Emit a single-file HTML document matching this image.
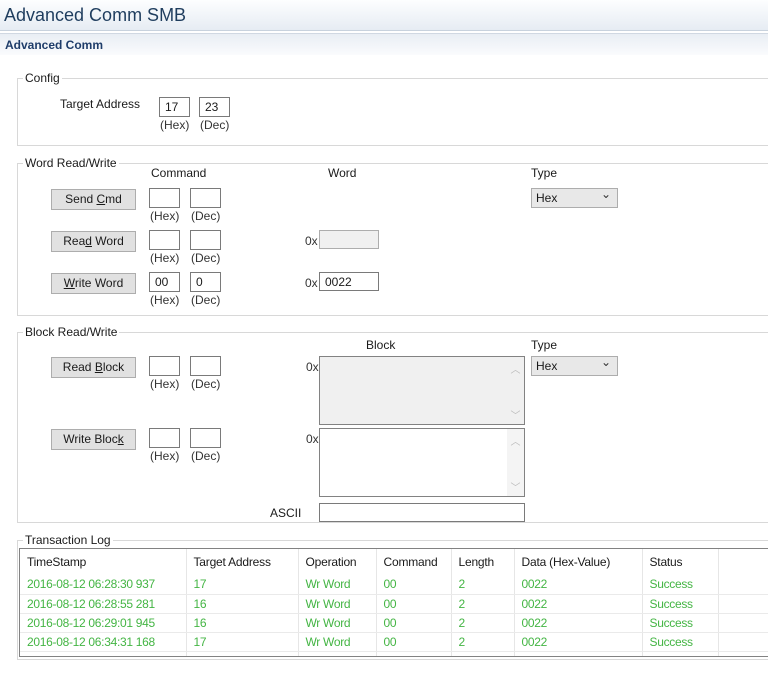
<!DOCTYPE html>
<html><head><style>
*{margin:0;padding:0;box-sizing:border-box}
body{width:768px;height:676px;background:#fff;font-family:"Liberation Sans",sans-serif;font-size:12px;color:#1a1a1a;position:relative;overflow:hidden}
.a{position:absolute;white-space:nowrap}
.title{left:0;top:0;width:768px;height:31px;background:linear-gradient(#fdfeff,#e6ecf3);border-bottom:1px solid #c8d2dd}
.band{left:0;top:33px;width:768px;height:22px;background:linear-gradient(#e9eef4,#fafbfd);border-top:1px solid #d0d8e2}
.grp{position:absolute;border:1px solid #d8d8d8;border-right:none}
.lg{position:absolute;background:#fff;padding:0 2px;font-size:12px}
.in{position:absolute;border:1px solid #7a7a7a;background:#fff;height:20px;padding:2px 5px;font-size:12px}
.btn{position:absolute;width:85px;height:21px;background:#e1e1e1;border:1px solid #adadad;text-align:center;line-height:19px}
.sel{position:absolute;width:87px;height:20px;border:1px solid #adadad;background:#e8e8e8;padding:2px 4px}
.sel:after{content:"⌄";position:absolute;right:6px;top:-2px;font-size:12px;color:#333}
.hl{position:absolute;font-size:12px;color:#333}
.ta{position:absolute;border:1px solid #828282}
.sb{position:absolute;right:0;top:0;bottom:0;width:17px;color:#bbb;font-size:10px;text-align:center}
table{border-collapse:collapse;font-size:12px;table-layout:fixed;width:758px}
td{height:19px;padding:0 0 0 7px;border-right:1px solid #e6e6e6;border-bottom:1px solid #eaeaea;color:#44b544;letter-spacing:-0.3px;overflow:hidden;white-space:nowrap}
th{height:26px;text-align:left;font-weight:normal;padding:0 0 0 7px;border-right:1px solid #e6e6e6;color:#1a1a1a;letter-spacing:-0.2px;white-space:nowrap;overflow:hidden}
</style></head><body>
<div class="a title"></div>
<div class="a" style="left:4px;top:5px;font-size:18px;color:#1f3d5e">Advanced Comm SMB</div>
<div class="a band"></div>
<div class="a" style="left:5px;top:38px;font-weight:bold;color:#1f3d6a;font-size:12px">Advanced Comm</div>

<div class="grp" style="left:17px;top:78px;width:751px;height:68px"></div>
<div class="lg" style="left:23px;top:71px">Config</div>
<div class="a" style="left:60px;top:97px">Target Address</div>
<div class="in" style="left:159px;top:97px;width:31px">17</div>
<div class="in" style="left:199px;top:97px;width:31px">23</div>
<div class="hl" style="left:160px;top:118px">(Hex)</div>
<div class="hl" style="left:200px;top:118px">(Dec)</div>

<div class="grp" style="left:17px;top:163px;width:751px;height:153px"></div>
<div class="lg" style="left:23px;top:156px">Word Read/Write</div>
<div class="a" style="left:151px;top:166px">Command</div>
<div class="a" style="left:328px;top:166px">Word</div>
<div class="a" style="left:531px;top:166px">Type</div>
<div class="sel" style="left:531px;top:188px">Hex</div>
<div class="btn" style="left:51px;top:189px">Send <u>C</u>md</div>
<div class="btn" style="left:51px;top:231px">Rea<u>d</u> Word</div>
<div class="btn" style="left:51px;top:273px"><u>W</u>rite Word</div>
<div class="in" style="left:149px;top:188px;width:31px"></div><div class="in" style="left:190px;top:188px;width:31px"></div>
<div class="in" style="left:149px;top:230px;width:31px"></div><div class="in" style="left:190px;top:230px;width:31px"></div>
<div class="in" style="left:149px;top:272px;width:31px">00</div><div class="in" style="left:190px;top:272px;width:31px">0</div>
<div class="hl" style="left:150px;top:209px">(Hex)</div><div class="hl" style="left:191px;top:209px">(Dec)</div>
<div class="hl" style="left:150px;top:251px">(Hex)</div><div class="hl" style="left:191px;top:251px">(Dec)</div>
<div class="hl" style="left:150px;top:293px">(Hex)</div><div class="hl" style="left:191px;top:293px">(Dec)</div>
<div class="hl" style="left:305px;top:234px">0x</div>
<div class="in" style="left:319px;top:230px;width:60px;height:19px;background:#f0f0f0;border-color:#adadad"></div>
<div class="hl" style="left:305px;top:276px">0x</div>
<div class="in" style="left:319px;top:272px;width:60px;height:19px">0022</div>

<div class="grp" style="left:17px;top:332px;width:751px;height:191px"></div>
<div class="lg" style="left:23px;top:325px">Block Read/Write</div>
<div class="a" style="left:366px;top:338px">Block</div>
<div class="a" style="left:531px;top:338px">Type</div>
<div class="sel" style="left:531px;top:356px">Hex</div>
<div class="btn" style="left:51px;top:357px">Read <u>B</u>lock</div>
<div class="btn" style="left:51px;top:429px">Write Bloc<u>k</u></div>
<div class="in" style="left:149px;top:356px;width:31px"></div><div class="in" style="left:190px;top:356px;width:31px"></div>
<div class="in" style="left:149px;top:428px;width:31px"></div><div class="in" style="left:190px;top:428px;width:31px"></div>
<div class="hl" style="left:150px;top:377px">(Hex)</div><div class="hl" style="left:191px;top:377px">(Dec)</div>
<div class="hl" style="left:150px;top:449px">(Hex)</div><div class="hl" style="left:191px;top:449px">(Dec)</div>
<div class="hl" style="left:306px;top:360px">0x</div>
<div class="ta" style="left:319px;top:356px;width:206px;height:69px;background:#f0f0f0"><div class="sb"><div style="margin-top:4px">︿</div><div style="position:absolute;bottom:2px;width:17px">﹀</div></div></div>
<div class="hl" style="left:306px;top:432px">0x</div>
<div class="ta" style="left:319px;top:428px;width:206px;height:69px;background:#fff"><div class="sb" style="background:#f4f4f4"><div style="margin-top:4px">︿</div><div style="position:absolute;bottom:2px;width:17px">﹀</div></div></div>
<div class="a" style="left:270px;top:506px">ASCII</div>
<div class="in" style="left:319px;top:503px;width:206px;height:19px"></div>

<div class="grp" style="left:17px;top:540px;width:751px;height:120px"></div>
<div class="lg" style="left:23px;top:533px">Transaction Log</div>
<div class="a" style="left:19px;top:548px;width:749px;height:109px;border:1px solid #828282;border-right:none;overflow:hidden;background:#fff">
<table>
<colgroup><col style="width:166px"><col style="width:112px"><col style="width:78px"><col style="width:75px"><col style="width:63px"><col style="width:128px"><col style="width:76px"><col style="width:60px"></colgroup>
<tr><th>TimeStamp</th><th>Target Address</th><th>Operation</th><th>Command</th><th>Length</th><th>Data (Hex-Value)</th><th>Status</th><th></th></tr>
<tr><td>2016-08-12 06:28:30 937</td><td>17</td><td>Wr Word</td><td>00</td><td>2</td><td>0022</td><td>Success</td><td></td></tr>
<tr><td>2016-08-12 06:28:55 281</td><td>16</td><td>Wr Word</td><td>00</td><td>2</td><td>0022</td><td>Success</td><td></td></tr>
<tr><td>2016-08-12 06:29:01 945</td><td>16</td><td>Wr Word</td><td>00</td><td>2</td><td>0022</td><td>Success</td><td></td></tr>
<tr><td>2016-08-12 06:34:31 168</td><td>17</td><td>Wr Word</td><td>00</td><td>2</td><td>0022</td><td>Success</td><td></td></tr>
<tr><td></td><td></td><td></td><td></td><td></td><td></td><td></td><td></td></tr>
</table>
</div>
</body></html>
